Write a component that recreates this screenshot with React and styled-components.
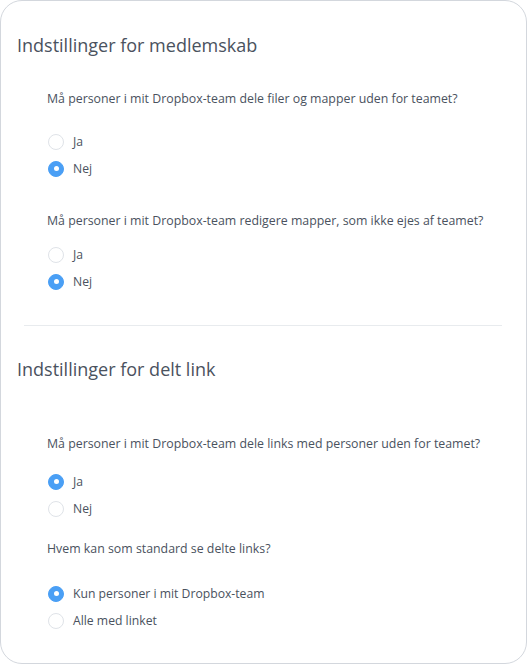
import React from "react";
import styled, { createGlobalStyle } from "styled-components";

const Global = createGlobalStyle`
  html, body { margin: 0; padding: 0; background: #ffffff; }
  body { font-family: "Open Sans", "Liberation Sans", sans-serif; }
  * { box-sizing: border-box; }
`;

const Card = styled.div`
  width: 527px;
  height: 664px;
  border: 1px solid #d3d7dd;
  border-radius: 22px;
  background: #fff;
  padding-top: 32px;
  display: flex;
  flex-direction: column;
`;

const Title = styled.h2`
  margin: ${(p) => p.$mt || 0}px 0 0 16px;
  font-size: 18px;
  font-weight: 400;
  line-height: 24px;
  color: #4a525e;
`;

const Question = styled.p`
  margin: ${(p) => p.$mt}px 0 0 46px;
  font-size: 12.35px;
  line-height: 18px;
  color: #4a525e;
`;

const Options = styled.div`
  margin: ${(p) => p.$mt}px 0 0 47px;
  display: flex;
  flex-direction: column;
`;

const Row = styled.label`
  display: flex;
  align-items: center;
  gap: 9px;
  height: 27px;
  font-size: 12.2px;
  color: #4a525e;
`;

const Radio = styled.span`
  width: 16px;
  height: 16px;
  border-radius: 50%;
  flex: none;
  display: flex;
  align-items: center;
  justify-content: center;
  background: ${(p) => (p.$on ? "#4a9ff5" : "#ffffff")};
  border: 1px solid ${(p) => (p.$on ? "#4a9ff5" : "#dfe3e8")};
  &::after {
    content: "";
    width: 5px;
    height: 5px;
    border-radius: 50%;
    background: #fff;
    display: ${(p) => (p.$on ? "block" : "none")};
  }
`;

const Divider = styled.hr`
  margin: ${(p) => p.$mt}px 24px 0 23px;
  border: none;
  border-top: 1px solid #e8ebee;
  height: 0;
`;

const Group = ({ mt, options, selected }) => (
  <Options $mt={mt}>
    {options.map((o) => (
      <Row key={o}>
        <Radio $on={o === selected} />
        {o}
      </Row>
    ))}
  </Options>
);

export default function App() {
  return (
    <>
      <Global />
      <Card>
        <Title>Indstillinger for medlemskab</Title>
        <Question $mt={33}>
          Må personer i mit Dropbox-team dele filer og mapper uden for teamet?
        </Question>
        <Group mt={20} options={["Ja", "Nej"]} selected="Nej" />
        <Question $mt={30}>
          Må personer i mit Dropbox-team redigere mapper, som ikke ejes af teamet?
        </Question>
        <Group mt={11} options={["Ja", "Nej"]} selected="Nej" />
        <Divider $mt={30} />
        <Title $mt={31}>Indstillinger for delt link</Title>
        <Question $mt={54}>
          Må personer i mit Dropbox-team dele links med personer uden for teamet?
        </Question>
        <Group mt={15} options={["Ja", "Nej"]} selected="Ja" />
        <Question $mt={18}>Hvem kan som standard se delte links?</Question>
        <Group
          mt={22}
          options={["Kun personer i mit Dropbox-team", "Alle med linket"]}
          selected="Kun personer i mit Dropbox-team"
        />
      </Card>
    </>
  );
}
